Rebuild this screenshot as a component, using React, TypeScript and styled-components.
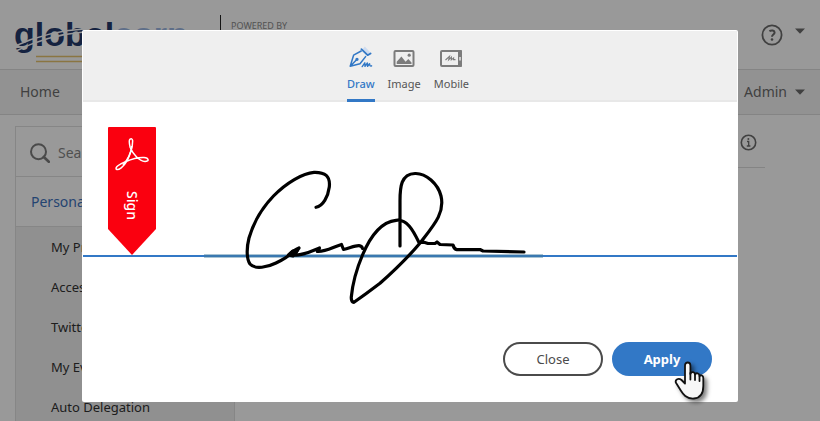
import React, { useState } from "react";
import styled, { createGlobalStyle, css } from "styled-components";

const GlobalStyle = createGlobalStyle`
  *, *::before, *::after { box-sizing: border-box; }
  body {
    margin: 0;
    overflow: hidden;
    background: #fff;
    color: #323232;
    font: 14px/20px "Noto Sans", "Open Sans", sans-serif;
  }
  button, input { font: inherit; color: inherit; }
  svg { display: block; flex: none; }
`;

const blue = "#3278c6";

const Page = styled.div`
  min-height: 100vh;
`;

const Header = styled.header`
  display: flex;
  height: 69px;
  padding: 0 15px;
`;

const LogoLink = styled.a`
  text-decoration: none;
`;

const LogoText = styled.text`
  font: bold 34px "Liberation Sans", sans-serif;
`;

const Powered = styled.div`
  height: 40px;
  margin: 15px 0 0 27px;
  padding: 1px 0 0 10px;
  border-left: 1px solid #222;
  color: #8a8a8a;
  font-size: 9px;
`;

const HeaderTools = styled.div`
  display: flex;
  align-items: center;
  gap: 12px;
  margin-left: auto;
`;

const IconButton = styled.button`
  display: flex;
  padding: 0;
  border: 0;
  background: none;
  color: #6c6c6c;
`;

const CaretButton = styled(IconButton)`
  margin-bottom: 8px;
`;

const Nav = styled.nav`
  display: flex;
  justify-content: space-between;
  align-items: center;
  height: 46px;
  padding: 0 15px 0 20px;
  border: solid #dcdcdc;
  border-width: 1px 0;
  background: #f4f4f4;
  color: #6c6c6c;
`;

const NavLink = styled.a`
  color: inherit;
  text-decoration: none;
`;

const NavMenu = styled(IconButton)`
  align-items: center;
  gap: 8px;
`;

const Columns = styled.div`
  display: flex;
  align-items: flex-start;
  gap: 20px;
  padding: 11px 55px 0 15px;
`;

const Sidebar = styled.aside`
  flex: none;
  width: 220px;
  border: 1px solid #e0e0e0;
  background: #f0f0f0;
`;

const SearchBox = styled.label`
  display: flex;
  align-items: center;
  gap: 8px;
  height: 50px;
  padding: 2px 14px 0;
  border-bottom: 1px solid #e0e0e0;
  background: #fff;
  color: #7c7c7c;
`;

const SearchInput = styled.input`
  min-width: 0;
  flex: 1;
  padding: 0;
  border: 0;
  outline: 0;
  background: none;
  &::placeholder { color: #858585; opacity: 1; }
`;

const SectionLink = styled.a`
  display: flex;
  align-items: center;
  height: 50px;
  padding-left: 15px;
  border-bottom: 1px solid #e0e0e0;
  background: #fff;
  color: #3c72bd;
  text-decoration: none;
`;

const MenuLink = styled.a`
  display: flex;
  align-items: center;
  height: 40px;
  padding-left: 35px;
  color: #323232;
  font-size: 13px;
  text-decoration: none;
`;

const Content = styled.main`
  display: flex;
  flex: 1;
  justify-content: flex-end;
  height: 42px;
  padding: 8px 8px 0 0;
  border-bottom: 1px solid #dcdcdc;
`;

const Overlay = styled.div`
  position: fixed;
  inset: 0;
  display: flex;
  justify-content: center;
  align-items: flex-start;
  padding-top: 30px;
  background: rgba(0, 0, 0, 0.4);
`;

const Dialog = styled.section`
  width: 80%;
  padding: 1px;
  border-radius: 2px;
  background: #fff;
`;

const Tabs = styled.div`
  display: flex;
  justify-content: center;
  gap: 13px;
  height: 71px;
  padding: 15px 4px 0 0;
  border-bottom: 2px solid #e8e8e8;
  background: #efefef;
`;

const Tab = styled.button<{ $active: boolean }>`
  display: flex;
  flex-direction: column;
  align-items: center;
  gap: 4px;
  height: 56px;
  padding: 0;
  border: 0;
  border-bottom: 3px solid transparent;
  background: none;
  color: #555;
  font-size: 11px;
  line-height: 20px;
  ${(p) => p.$active && css`
    border-bottom-color: ${blue};
    color: ${blue};
    font-weight: 500;
  `}
`;

const Stage = styled.div`
  position: relative;
  padding: 25px 25px 0;
  border-bottom: 2px solid ${blue};
`;

const Ribbon = styled.div`
  display: flex;
  flex-direction: column;
  align-items: center;
  gap: 20px;
  width: 48px;
  height: 128px;
  padding-top: 10px;
  border-radius: 1px;
  background: #fa000f;
  clip-path: polygon(0 0, 100% 0, 100% 102px, 50% 100%, 0 102px);
  color: #fff;
`;

const RibbonText = styled.span`
  writing-mode: vertical-rl;
  font-size: 14px;
  font-weight: 500;
  line-height: 20px;
`;

const Signature = styled.svg`
  position: absolute;
  top: 58px;
  left: 117px;
`;

const Actions = styled.div`
  display: flex;
  justify-content: flex-end;
  gap: 9px;
  padding: 85px 25px 25px;
`;

const Button = styled.button<{ $primary?: boolean }>`
  width: 100px;
  height: 34px;
  padding: 0;
  border: 2px solid ${(p) => (p.$primary ? blue : "#4b4b4b")};
  border-radius: 17px;
  background: ${(p) => (p.$primary ? blue : "#fff")};
  color: ${(p) => (p.$primary ? "#fff" : "#4b4b4b")};
  font-size: 13px;
  font-weight: ${(p) => (p.$primary ? 700 : 400)};
`;

const PointerAnchor = styled.div`
  position: relative;
`;

const Pointer = styled.svg`
  position: absolute;
  top: 18px;
  left: 61px;
  overflow: visible;
  filter: drop-shadow(3px 3px 2px rgba(0, 0, 0, 0.5));
  pointer-events: none;
`;

const Caret = () => (
  <svg width="10" height="6" viewBox="0 0 10 6" aria-hidden="true">
    <path d="M0 .5h10L5 5.8z" fill="currentColor" />
  </svg>
);

const Logo = () => (
  <svg width="178" height="69" viewBox="15 0 178 69" aria-label="globalcorp">
    <LogoText x="14" y="46" fill="#23396b">
      global<tspan fill="#9fb9e5">corp</tspan>
    </LogoText>
    <path d="M36 56.5H191M36 61.5H191" stroke="#e6c36e" strokeWidth="1.4" />
    <path d="M15 46Q48 31 84 29M16 51Q48 35 84 32" fill="none" stroke="#fff" strokeWidth="1.4" />
  </svg>
);

const HelpIcon = () => (
  <svg width="22" height="22" viewBox="0 0 22 22" fill="none" stroke="currentColor" aria-hidden="true">
    <circle cx="11" cy="11" r="9.6" strokeWidth="1.8" />
    <path d="M8.4 7.2c2.1-1.4 5.2-.8 5.2 1.4 0 2-2.6 2-2.6 4.2" strokeWidth="2" />
    <circle cx="11" cy="15.5" r="1.3" fill="currentColor" stroke="none" />
  </svg>
);

const InfoIcon = () => (
  <svg width="17" height="17" viewBox="0 0 17 17" fill="none" stroke="currentColor" aria-hidden="true">
    <circle cx="8.5" cy="8.5" r="7.2" strokeWidth="1.6" />
    <path d="M7 7.5h1.7v4.2M6.8 12h3.6" strokeWidth="1.3" />
    <circle cx="8.4" cy="5" r="1" fill="currentColor" stroke="none" />
  </svg>
);

const SearchIcon = () => (
  <svg width="20" height="20" viewBox="0 0 20 20" fill="none" stroke="currentColor" aria-hidden="true">
    <circle cx="8.5" cy="8.7" r="7.5" strokeWidth="2" />
    <path d="M13.8 14l5 4.8" strokeWidth="2.6" strokeLinecap="round" />
  </svg>
);

const DrawIcon = () => (
  <svg width="24" height="24" viewBox="0 0 24 24" fill="none" stroke={blue} strokeWidth="1.5" strokeLinecap="round" strokeLinejoin="round" aria-hidden="true">
    <path d="M13 4l2.8-3.6 6 6.6-3 2.2z" fill="#cedcf0" stroke="none" />
    <path d="M12.4 3.2l6.2 6 3-1.8" strokeWidth="1.8" />
    <path d="M12.2 5L4.6 9.2 1.2 20.2l9.8-2.4 5.6-7.2M1.5 20l5.8-6" />
    <circle cx="8" cy="13.3" r=".9" fill={blue} />
    <path d="M13.2 20.6l2.6-3.8.2 3.6 2.4-3.4.2 3.4 2-2.6c0 2 .8 2.8 2 2" strokeWidth="1.4" />
  </svg>
);

const ImageIcon = () => (
  <svg width="24" height="24" viewBox="0 0 24 24" aria-hidden="true">
    <rect x="2.5" y="5" width="19" height="15" rx="1" fill="none" stroke="#7c7c7c" strokeWidth="2" />
    <path d="M4.7 18v-2.3l4.7-5.2 4.2 5.3 2.7-2.8 3.2 3.5V18z" fill="#7c7c7c" />
    <circle cx="17.2" cy="9.2" r="1.6" fill="#7c7c7c" />
  </svg>
);

const MobileIcon = () => (
  <svg width="24" height="24" viewBox="0 0 24 24" fill="none" stroke="#7c7c7c" aria-hidden="true">
    <rect x="2" y="5" width="20" height="15" rx="1" strokeWidth="2" />
    <path d="M19 4h3a1 1 0 011 1v15a1 1 0 01-1 1h-3z" fill="#7c7c7c" stroke="none" />
    <path d="M21 11v3.4" stroke="#efefef" strokeWidth="1.4" />
    <path d="M6.5 14l4-3.6-.8 3.4 2.7-2.6-.1 2.6 2.3-1.9-.1 1.7h2" strokeWidth="1.1" />
  </svg>
);

const AcrobatMark = () => (
  <svg width="34" height="34" viewBox="0 0 34 34" fill="none" stroke="#fff" strokeLinejoin="round" aria-hidden="true">
    <path d="M14.8 2.4Q17 .8 17.6 3.5C17.8 10 15 18 12 24C8.6 30 3.5 33.4 1.4 32.3C-.3 30 5 27 10.5 24.8C17 22 24 20.3 29 20.6C34 21 34.5 24.5 30 24.6C24 24.2 18 17 15.2 10.5Q13.6 4 14.8 2.4Z" strokeWidth="1.5" />
    <path d="M16.8 9C16 16 11.5 24 8 28" strokeWidth="1.6" />
  </svg>
);

const tabs = [
  { name: "Draw", icon: <DrawIcon /> },
  { name: "Image", icon: <ImageIcon /> },
  { name: "Mobile", icon: <MobileIcon /> },
];

const settings = ["My Profile", "Access Tokens", "Twitter", "My Events/Alerts", "Auto Delegation"];

export default function App() {
  const [active, setActive] = useState("Draw");
  return (
    <>
      <GlobalStyle />
      <Page>
        <Header>
          <LogoLink href="#"><Logo /></LogoLink>
          <Powered>POWERED BY</Powered>
          <HeaderTools>
            <IconButton aria-label="Help"><HelpIcon /></IconButton>
            <CaretButton aria-label="Account menu"><Caret /></CaretButton>
          </HeaderTools>
        </Header>
        <Nav>
          <NavLink href="#">Home</NavLink>
          <NavMenu>Admin <Caret /></NavMenu>
        </Nav>
        <Columns>
          <Sidebar>
            <SearchBox>
              <SearchIcon />
              <SearchInput type="text" placeholder="Search" aria-label="Search" />
            </SearchBox>
            <SectionLink href="#">Personal Preferences</SectionLink>
            {settings.map((name) => <MenuLink href="#" key={name}>{name}</MenuLink>)}
          </Sidebar>
          <Content>
            <IconButton aria-label="Information"><InfoIcon /></IconButton>
          </Content>
        </Columns>
      </Page>
      <Overlay>
        <Dialog role="dialog" aria-modal="true" aria-label="Signature">
          <Tabs role="tablist">
            {tabs.map(({ name, icon }) => (
              <Tab key={name} role="tab" aria-selected={active === name} $active={active === name} onClick={() => setActive(name)}>
                {icon}
                {name}
              </Tab>
            ))}
          </Tabs>
          <Stage>
            <Ribbon>
              <AcrobatMark />
              <RibbonText>Sign</RibbonText>
            </Ribbon>
            <Signature width="350" height="150" viewBox="200 160 350 150" role="img" aria-label="Handwritten signature">
              <path d="M204 256H543" stroke="#a9c4d4" strokeWidth="4" />
              <path d="M204 256H543" stroke="#3a78b0" strokeWidth="2" />
              <g fill="none" stroke="#000" strokeWidth="3.2" strokeLinecap="round" strokeLinejoin="round">
                <path d="M316 207.3C323 206 328 197 329.3 187C330.5 176 325 172 314 172.3C303 173 286 183 273.5 196C261 209 253 224 249 238C246 250 247 260 250 264C255 270 268 267 276 263C282 260 288 257 290 254C292 251 295 250 299 248L294 255C303 256 312 251 319.5 248L317.5 251.5C326 252 333 247 341.5 244.5L343.5 249.5C350 248 355 245.5 359 245.7Q362 246 362.5 248.5" />
                <path d="M288.5 255L293 251L297 251L293 256Z" fill="#000" />
                <path d="M400 246V201C400 187 401 174 415 173.5C426 173 438 184 441 196C445 213 434 225 420.5 242.5C410 255 395 270 380 283.3Q366 294 354 302.3Q351 302 351.3 297C353 279 357 268 362.5 255C370 237 380 222 396 220.3C407 219 413 230 419 242.5L424 242.2L428 243.5L435 243.5L437 242L440 244.5L453 245Q454 249 457 249.7L480 249.5L483 251L524 252" />
              </g>
            </Signature>
          </Stage>
          <Actions>
            <Button type="button">Close</Button>
            <PointerAnchor>
              <Button type="button" $primary>Apply</Button>
              <Pointer width="32" height="40" viewBox="0 0 32 40" aria-hidden="true">
                <path d="M12 21V5.5C12 1.5 17.4 1.5 17.4 5.5V14C18.5 11 22 12 22 14.5C23 12.5 26.5 13 26.5 16C28 14.5 30.3 15.5 30.3 18V26C30.3 34 27 38 21 38.5C13 39 10 34 7.5 30L2.8 22.5C2 19.5 5.5 17.5 8.5 20L12 23.5Z" fill="#f7f7f7" stroke="#111" strokeWidth="1.8" strokeLinejoin="round" />
                <path d="M17.4 13v6.5M22 14.5V20M26.5 16v5" stroke="#111" strokeWidth="1.8" strokeLinecap="round" />
              </Pointer>
            </PointerAnchor>
          </Actions>
        </Dialog>
      </Overlay>
    </>
  );
}
